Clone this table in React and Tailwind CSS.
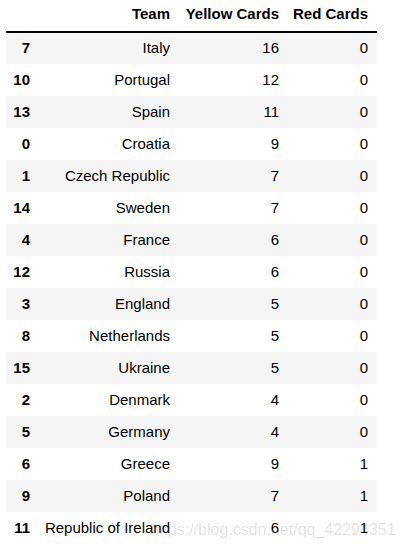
import React from 'react';

const rows = [
  [7, 'Italy', 16, 0],
  [10, 'Portugal', 12, 0],
  [13, 'Spain', 11, 0],
  [0, 'Croatia', 9, 0],
  [1, 'Czech Republic', 7, 0],
  [14, 'Sweden', 7, 0],
  [4, 'France', 6, 0],
  [12, 'Russia', 6, 0],
  [3, 'England', 5, 0],
  [8, 'Netherlands', 5, 0],
  [15, 'Ukraine', 5, 0],
  [2, 'Denmark', 4, 0],
  [5, 'Germany', 4, 0],
  [6, 'Greece', 9, 1],
  [9, 'Poland', 7, 1],
  [11, 'Republic of Ireland', 6, 1],
];

const App = () => {
  return (
    <div className="relative w-[400px] h-[549px] bg-white overflow-hidden font-['Liberation_Sans',Arial,sans-serif] text-[15px] text-black">
      <table className="ml-[6px] border-collapse table-fixed w-[371px]">
        <colgroup>
          <col className="w-[33px]" />
          <col className="w-[140px]" />
          <col className="w-[109px]" />
          <col className="w-[89px]" />
        </colgroup>
        <thead>
          <tr className="h-[32px] border-b-2 border-black">
            <th className="pr-[9px] text-right font-bold"></th>
            <th className="pr-[9px] pb-[2px] text-right font-bold">Team</th>
            <th className="pr-[9px] pb-[2px] text-right font-bold">Yellow Cards</th>
            <th className="pr-[9px] pb-[2px] text-right font-bold">Red Cards</th>
          </tr>
        </thead>
        <tbody>
          {rows.map((r, i) => (
            <tr key={r[0]} className={`h-[32px] ${i % 2 === 0 ? 'bg-[#f5f5f5]' : 'bg-white'}`}>
              <td className="pr-[9px] text-right font-bold">{r[0]}</td>
              <td className="pr-[9px] text-right whitespace-nowrap">{r[1]}</td>
              <td className="pr-[9px] text-right">{r[2]}</td>
              <td className="pr-[9px] text-right">{r[3]}</td>
            </tr>
          ))}
        </tbody>
      </table>
      <div className="absolute left-[150px] top-[518px] text-[16px] text-black/[0.13] whitespace-nowrap">
        https://blog.csdn.net/qq_42294351
      </div>
    </div>
  );
};

export default App;
